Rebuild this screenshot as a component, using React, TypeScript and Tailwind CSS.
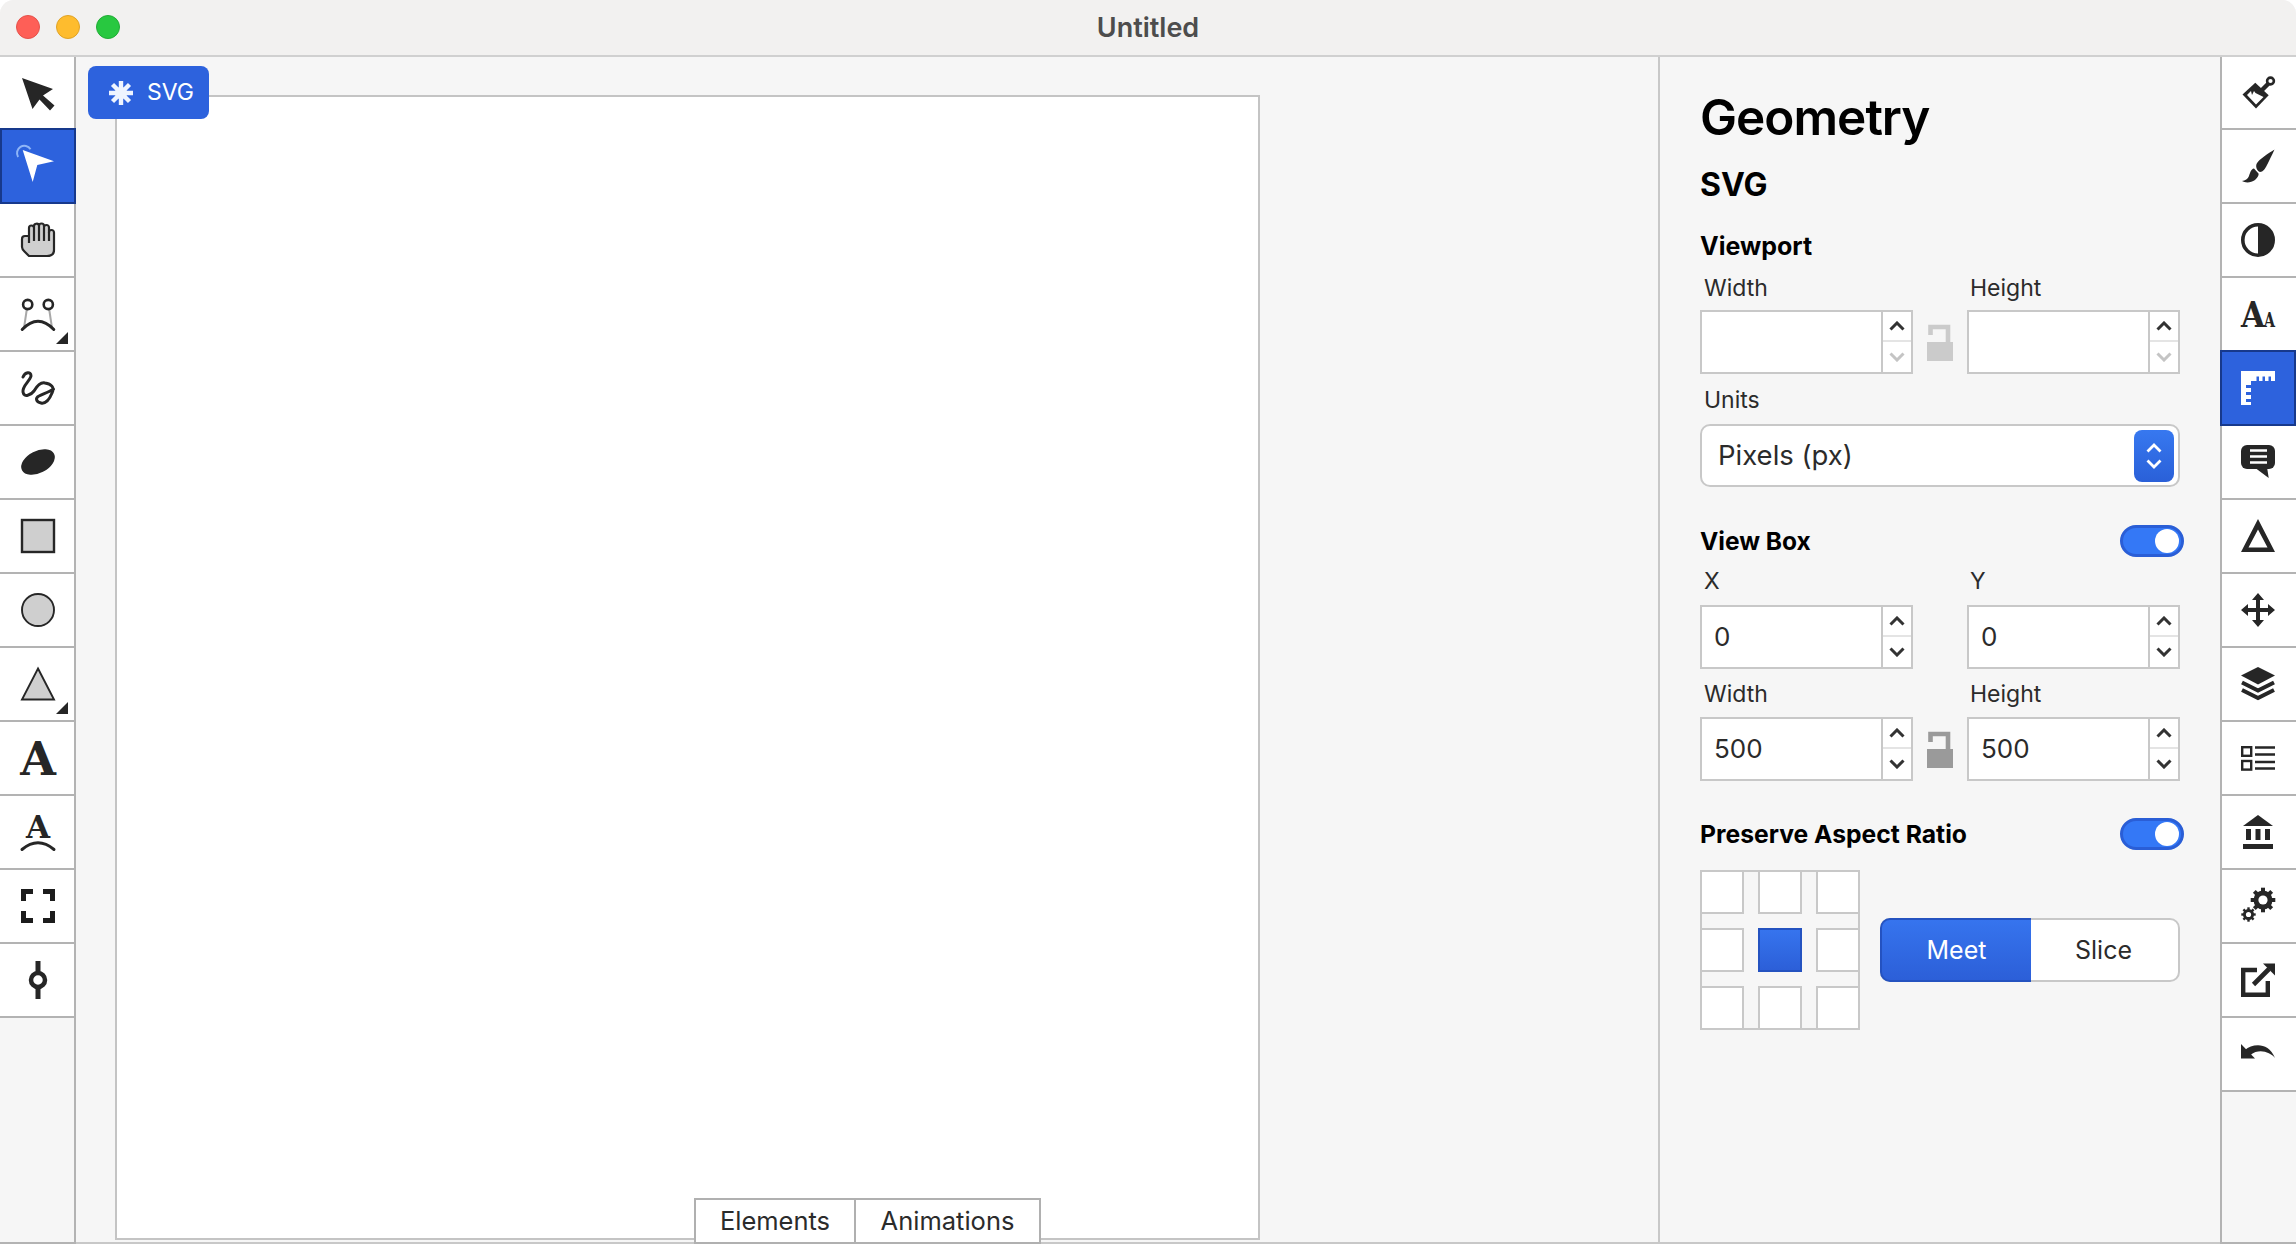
import type { ReactNode } from 'react';

const INK = '#262626';
const SOFT = '#cfcfcf';

function Ico({ children }: { children: ReactNode }) {
  return (
    <svg viewBox="0 0 34 34" className="w-[34px] h-[34px] overflow-visible">
      {children}
    </svg>
  );
}

function Gear({ cx, cy, r, hole, teeth, w }: { cx: number; cy: number; r: number; hole: number; teeth: number; w: number }) {
  return (
    <g>
      {Array.from({ length: teeth }).map((_, i) => (
        <rect
          key={i}
          x={cx - w / 2}
          y={cy - r - w * 0.7}
          width={w}
          height={w * 1.4}
          fill={INK}
          transform={`rotate(${(i * 360) / teeth} ${cx} ${cy})`}
        />
      ))}
      <circle cx={cx} cy={cy} r={r} fill={INK} />
      <circle cx={cx} cy={cy} r={hole} fill="#fff" />
    </g>
  );
}

const leftTools: { icon: ReactNode; more?: boolean; active?: boolean }[] = [
  {
    icon: (
      <Ico>
        <path d="M1 1L32 12L22 18.5L33.5 28.5L29 33.5L18.5 22.5L11.5 32Z" fill={INK} />
      </Ico>
    ),
  },
  {
    active: true,
    icon: (
      <Ico>
        <path d="M-4.4 6.5A6.5 6.5 0 1 1 8 -1.2" fill="none" stroke="#8fb5f7" strokeWidth="2" transform="translate(1.5 1.5)" />
        <path d="M1.7 1L33 12.3L16.3 16L11.7 33Z" fill="#fff" />
      </Ico>
    ),
  },
  {
    icon: (
      <Ico>
        <path
          d="M8 33H26C30 33 33 31 33 27V9.5A2.5 2.5 0 0 0 28 9.5V4.5A2.5 2.5 0 0 0 23 4.5V3A2.5 2.5 0 0 0 18 3V3A2.5 2.5 0 0 0 13 3.5V5A2.5 2.5 0 0 0 8 5V13H4C2 13 1 14.5 1 16V24C1 26 2 27 3.5 28.5Z"
          fill={SOFT}
          stroke={INK}
          strokeWidth="2.2"
          strokeLinejoin="round"
        />
        <path d="M13 5V18M18 3V18M23 5V18M28 9V18M8 13V20" fill="none" stroke={INK} strokeWidth="2.2" />
      </Ico>
    ),
  },
  {
    more: true,
    icon: (
      <Ico>
        <path d="M6 11L3 31M28 11L31 31" stroke="#a8a8a8" strokeWidth="2" fill="none" />
        <circle cx="6.7" cy="7.5" r="4.6" fill="#fff" stroke={INK} strokeWidth="2.6" />
        <circle cx="27.3" cy="7.5" r="4.6" fill="#fff" stroke={INK} strokeWidth="2.6" />
        <path d="M1.2 32.5Q17 16 32.8 32.5" fill="none" stroke={INK} strokeWidth="3" strokeLinecap="round" />
      </Ico>
    ),
  },
  {
    icon: (
      <Ico>
        <path
          d="M2 6C4 1 10 0 10 5C9 10 1 15 2 21C3 27 10 24 13 20C16 15 20 11 24 12C30 13 34 16 31 22C29 27 25 33 20 32C15 31 14 27 18 25C22 23 28 21 32.5 18"
          fill="none"
          stroke={INK}
          strokeWidth="3"
          strokeLinecap="round"
        />
      </Ico>
    ),
  },
  {
    icon: (
      <Ico>
        <ellipse cx="17" cy="17" rx="18" ry="11" fill={INK} transform="rotate(-27 17 17)" />
      </Ico>
    ),
  },
  {
    icon: (
      <Ico>
        <rect x="1" y="1" width="32" height="32" fill={SOFT} stroke={INK} strokeWidth="2.4" />
      </Ico>
    ),
  },
  {
    icon: (
      <Ico>
        <circle cx="17" cy="17" r="16" fill={SOFT} stroke={INK} strokeWidth="1.9" />
      </Ico>
    ),
  },
  {
    more: true,
    icon: (
      <Ico>
        <path d="M17 1.5L33 32.5H1Z" fill={SOFT} stroke={INK} strokeWidth="1.9" />
      </Ico>
    ),
  },
  {
    icon: (
      <Ico>
        <text x="17" y="33.5" textAnchor="middle" fontFamily="'DejaVu Serif', serif" fontWeight="700" fontSize="46" fill={INK}>
          A
        </text>
      </Ico>
    ),
  },
  {
    icon: (
      <Ico>
        <text x="17" y="23" textAnchor="middle" fontFamily="'DejaVu Serif', serif" fontWeight="700" fontSize="31" fill={INK}>
          A
        </text>
        <path d="M1 34.5Q17 21 33 34.5" fill="none" stroke={INK} strokeWidth="3" strokeLinecap="round" />
      </Ico>
    ),
  },
  {
    icon: (
      <Ico>
        <path d="M12 2.5H2.5V12M22 2.5H31.5V12M12 31.5H2.5V22M22 31.5H31.5V22" fill="none" stroke="#1c1c1c" strokeWidth="5" />
      </Ico>
    ),
  },
  {
    icon: (
      <Ico>
        <path d="M17 -2V9M17 25V36" stroke={INK} strokeWidth="5" />
        <circle cx="17" cy="17" r="7" fill="#fff" stroke={INK} strokeWidth="4.5" />
      </Ico>
    ),
  },
];

const rightTools: { icon: ReactNode; active?: boolean }[] = [
  {
    icon: (
      <Ico>
        <circle cx="29.5" cy="5" r="3.4" fill="none" stroke={INK} strokeWidth="2.6" />
        <path d="M27.5 7.5L21 14" stroke={INK} strokeWidth="4.5" />
        <path d="M14.3 6.7L27.7 19.3L15 32.5L1.5 18.5Z" fill={INK} />
        <path d="M14.5 17L22.5 21L15 28.5L6 19L10 15L11 19L13 15Z" fill="#fff" />
      </Ico>
    ),
  },
  {
    icon: (
      <Ico>
        <path d="M33.5 .5C28 4 18 10 15.5 15C14.5 18 16 22 19 23C22 23 24 20 26 16C28 12 31 6 33.5 .5Z" fill={INK} />
        <path d="M13 19.5C10 20 9 24 8 27C7 30 4 31.5 1 32C4 34 10 34 14 31C17 28 18 26 17.5 24.5Z" fill={INK} />
      </Ico>
    ),
  },
  {
    icon: (
      <Ico>
        <circle cx="17" cy="17" r="15.2" fill="#fff" stroke={INK} strokeWidth="3.6" />
        <path d="M17 1.8A15.2 15.2 0 0 1 17 32.2Z" fill={INK} />
      </Ico>
    ),
  },
  {
    icon: (
      <Ico>
        <text x="0" y="30" fontFamily="'DejaVu Serif', serif" fontWeight="700" fontSize="35" fill={INK} textLength="24" lengthAdjust="spacingAndGlyphs">
          A
        </text>
        <text x="23" y="30" fontFamily="'DejaVu Serif', serif" fontWeight="700" fontSize="20" fill={INK} textLength="11" lengthAdjust="spacingAndGlyphs">
          A
        </text>
      </Ico>
    ),
  },
  {
    active: true,
    icon: (
      <Ico>
        <path d="M0 0H34V10H30V5.5H27.5V10H24V5.5H21.5V10H18V5.5H15.5V10H10V14H5V17H10V21H5V24H10V28H5V31H10V34H0Z" fill="#fff" />
      </Ico>
    ),
  },
  {
    icon: (
      <Ico>
        <rect x="0" y="0" width="34" height="24" rx="6" fill={INK} />
        <path d="M13 22L27.7 33L26 22Z" fill={INK} />
        <path d="M9 5.5H26M9 11.5H26M9 17.5H26" stroke="#fff" strokeWidth="2.6" />
      </Ico>
    ),
  },
  {
    icon: (
      <Ico>
        <path fillRule="evenodd" d="M17 0L34 33H0ZM17 10.5L7.5 28.5H26.5Z" fill={INK} />
      </Ico>
    ),
  },
  {
    icon: (
      <Ico>
        <path d="M17 4V30M4 17H30" stroke={INK} strokeWidth="4" />
        <path d="M17 0L23 7H11ZM17 34L11 27H23ZM0 17L7 11V23ZM34 17L27 23V11Z" fill={INK} />
      </Ico>
    ),
  },
  {
    icon: (
      <Ico>
        <path d="M17 0L34 8.5L17 17.5L0 8.5Z" fill={INK} />
        <path d="M1 15.5L17 23.5L33 15.5M1 23L17 31L33 23" fill="none" stroke={INK} strokeWidth="4" />
      </Ico>
    ),
  },
  {
    icon: (
      <Ico>
        <g transform="translate(0 5)">
          <rect x="1.2" y="1.2" width="9" height="8.6" fill="#fff" stroke={INK} strokeWidth="2.4" />
          <rect x="1.2" y="15" width="9" height="8.6" fill="#fff" stroke={INK} strokeWidth="2.4" />
          <path d="M14 1.5H34M14 8.5H34M14 16H34M14 22.5H34" stroke={INK} strokeWidth="2.4" />
        </g>
      </Ico>
    ),
  },
  {
    icon: (
      <Ico>
        <path d="M2 11L17 0L32 11Z" fill={INK} />
        <path d="M5 14H10V25H5ZM14.5 14H19.5V25H14.5ZM24 14H29V25H24ZM2 29H32V34H2Z" fill={INK} />
      </Ico>
    ),
  },
  {
    icon: (
      <Ico>
        <Gear cx={22} cy={11} r={9.5} hole={4.6} teeth={8} w={4} />
        <Gear cx={7.5} cy={25.5} r={5.5} hole={2.6} teeth={8} w={2.4} />
      </Ico>
    ),
  },
  {
    icon: (
      <Ico>
        <path d="M16 7H2.2V31.8H26.8V18" fill="none" stroke={INK} strokeWidth="4.4" />
        <path d="M12.5 21.5L28 6" stroke={INK} strokeWidth="4.6" />
        <path d="M34 0.5V12.5L22 .5Z" fill={INK} />
      </Ico>
    ),
  },
  {
    icon: (
      <Ico>
        <path d="M0 7V21.5H14Z" fill={INK} />
        <path d="M4 13C11 7 27 4 34 21C29 15 18 11 9.5 18Z" fill={INK} />
      </Ico>
    ),
  },
];

function Chevron({ up, muted }: { up?: boolean; muted?: boolean }) {
  return (
    <svg viewBox="0 0 16 10" className="w-[16px] h-[10px]">
      <path d={up ? 'M1.5 8.5L8 2L14.5 8.5' : 'M1.5 1.5L8 8L14.5 1.5'} fill="none" stroke={muted ? '#c4c4c4' : '#333'} strokeWidth="3" />
    </svg>
  );
}

function Stepper({ value, downMuted }: { value?: string; downMuted?: boolean }) {
  return (
    <div className="w-[213px] h-[64px] flex bg-white border-2 border-[#c8c8c8]">
      <div className="flex-1 flex items-center pl-[12px] text-[26px] leading-none text-[#2b2b2b]">{value}</div>
      <div className="w-[30px] flex flex-col border-l-2 border-[#c8c8c8]">
        <div className="h-[30px] flex items-center justify-center border-b-2 border-[#e4e4e4]">
          <Chevron up />
        </div>
        <div className="flex-1 flex items-center justify-center">
          <Chevron muted={downMuted} />
        </div>
      </div>
    </div>
  );
}

function Lock({ color }: { color: string }) {
  return (
    <svg viewBox="0 0 26 37" className="w-[26px] h-[37px]">
      <path d="M3.5 11V3H21V18" fill="none" stroke={color} strokeWidth="4.6" />
      <rect x="0" y="18" width="26" height="19" fill={color} />
    </svg>
  );
}

function Toggle() {
  return (
    <div className="w-[64px] h-[32px] rounded-full bg-[#3478f6] border-[3px] border-[#2a5ed6] flex items-center justify-end pr-[2px]">
      <div className="w-[24px] h-[24px] rounded-full bg-white" />
    </div>
  );
}

function FieldLabel({ children }: { children: ReactNode }) {
  return <div className="pl-[4px] h-[24px] flex items-center text-[23px] leading-none text-[#2b2b2b]">{children}</div>;
}

export default function App() {
  return (
    <div className="w-[2296px] h-[1244px] flex flex-col overflow-hidden bg-white font-['Inter',sans-serif]">
      <div className="flex-1 min-h-0 flex flex-col bg-[#f6f6f6] rounded-t-[14px] overflow-hidden">
        {/* Title bar */}
        <div className="relative h-[57px] shrink-0 flex items-center justify-center bg-[#f2f1f0] border-b-2 border-[#d0d0d0]">
          <div className="absolute left-[16px] top-[15px] flex gap-[16px]">
            <span className="w-[24px] h-[24px] rounded-full bg-[#fe5f57] border border-[#e5524b]" />
            <span className="w-[24px] h-[24px] rounded-full bg-[#febc2e] border border-[#e0a326]" />
            <span className="w-[24px] h-[24px] rounded-full bg-[#28c840] border border-[#22ac36]" />
          </div>
          <span className="text-[27px] font-semibold leading-none text-[#4d4d4d]">Untitled</span>
        </div>

        <div className="flex-1 min-h-0 flex">
          {/* Left tools */}
          <div className="w-[76px] shrink-0 flex flex-col border-r-2 border-b-2 border-[#b3b3b3]">
            {leftTools.map((t, i) => (
              <div
                key={i}
                className={
                  'relative flex items-center justify-center ' +
                  (i === 0
                    ? 'h-[73px] pl-[2px] bg-white'
                    : t.active
                      ? 'h-[76px] -mt-[2px] -mr-[2px] bg-[#2d62dd] border-2 border-[#17398c]'
                      : 'h-[74px] pl-[2px] bg-white border-b-2 border-[#b3b3b3]')
                }
              >
                {t.icon}
                {t.more && (
                  <svg viewBox="0 0 12 12" className="absolute right-[6px] bottom-[6px] w-[12px] h-[12px]">
                    <path d="M12 0V12H0Z" fill={INK} />
                  </svg>
                )}
              </div>
            ))}
          </div>

          {/* Canvas */}
          <div className="relative w-[1584px] shrink-0 border-r-2 border-b-2 border-[#c8c8c8] pl-[39px] pt-[38px]">
            <div className="w-[1145px] h-[1145px] bg-white border-2 border-[#c4c4c4]" />
            <div className="absolute left-[12px] top-[9px] w-[121px] h-[53px] flex items-center gap-[13px] pl-[20px] rounded-[8px] bg-[#2d62dd] text-white text-[23px] leading-none">
              <svg viewBox="0 0 26 26" className="w-[26px] h-[26px]">
                <path d="M13 1V25M1 13H25M4.5 4.5L21.5 21.5M21.5 4.5L4.5 21.5" stroke="#eef4ff" strokeWidth="4.4" />
                <circle cx="13" cy="13" r="6" fill="#eef4ff" />
              </svg>
              SVG
            </div>
            <div className="absolute left-[618px] -bottom-[2px] h-[46px] flex bg-white border-2 border-[#b0b0b0] text-[25.5px] leading-none text-[#2b2b2b]">
              <div className="w-[160px] flex items-center justify-center border-r-2 border-[#b0b0b0]">Elements</div>
              <div className="w-[183px] flex items-center justify-center">Animations</div>
            </div>
          </div>

          {/* Geometry panel */}
          <div className="w-[560px] shrink-0 pl-[40px] pr-[40px] pt-[31px] flex flex-col border-b-2 border-[#c8c8c8]">
            <h1 className="h-[60px] flex items-center text-[49.5px] font-semibold tracking-[-0.02em] leading-none text-black">Geometry</h1>
            <h2 className="mt-[17px] h-[40px] flex items-center text-[32px] font-bold leading-none text-black">SVG</h2>

            <div className="mt-[27px] h-[28px] flex items-center text-[25px] font-bold leading-none text-black">Viewport</div>
            <div className="mt-[16px] flex">
              <div className="w-[213px]">
                <FieldLabel>Width</FieldLabel>
              </div>
              <div className="ml-[53px]">
                <FieldLabel>Height</FieldLabel>
              </div>
            </div>
            <div className="mt-[10px] flex items-center justify-between w-[480px]">
              <Stepper downMuted />
              <Lock color="#cbcbcb" />
              <Stepper downMuted />
            </div>
            <div className="mt-[14px]">
              <FieldLabel>Units</FieldLabel>
            </div>
            <div className="mt-[12px] w-[480px] h-[63px] flex items-center justify-between pl-[16px] pr-[4px] bg-white border-2 border-[#c8c8c8] rounded-[10px] text-[27.5px] leading-none text-[#2b2b2b]">
              Pixels (px)
              <div className="w-[40px] h-[52px] flex flex-col items-center justify-center gap-[6px] rounded-[8px] bg-gradient-to-b from-[#3778f0] to-[#2a60d8]">
                <svg viewBox="0 0 16 10" className="w-[16px] h-[10px]">
                  <path d="M1.5 8.5L8 2L14.5 8.5" fill="none" stroke="#fff" strokeWidth="2.8" />
                </svg>
                <svg viewBox="0 0 16 10" className="w-[16px] h-[10px]">
                  <path d="M1.5 1.5L8 8L14.5 1.5" fill="none" stroke="#fff" strokeWidth="2.8" />
                </svg>
              </div>
            </div>

            <div className="mt-[38px] w-[484px] h-[32px] flex items-center justify-between text-[24.5px] font-bold leading-none text-black">
              View Box
              <Toggle />
            </div>
            <div className="mt-[12px] flex">
              <div className="w-[213px]">
                <FieldLabel>X</FieldLabel>
              </div>
              <div className="ml-[53px]">
                <FieldLabel>Y</FieldLabel>
              </div>
            </div>
            <div className="mt-[12px] flex justify-between w-[480px]">
              <Stepper value="0" />
              <Stepper value="0" />
            </div>
            <div className="mt-[13px] flex">
              <div className="w-[213px]">
                <FieldLabel>Width</FieldLabel>
              </div>
              <div className="ml-[53px]">
                <FieldLabel>Height</FieldLabel>
              </div>
            </div>
            <div className="mt-[11px] flex items-center justify-between w-[480px]">
              <Stepper value="500" />
              <Lock color="#9a9a9a" />
              <Stepper value="500" />
            </div>

            <div className="mt-[37px] w-[484px] h-[32px] flex items-center justify-between text-[24.7px] font-bold leading-none text-black">
              Preserve Aspect Ratio
              <Toggle />
            </div>
            <div className="mt-[20px] flex items-center gap-[20px]">
              <div className="w-[160px] h-[160px] border-2 border-[#c8c8c8]">
                <div className="-m-[2px] w-[160px] grid grid-cols-[repeat(3,44px)] grid-rows-[repeat(3,44px)] gap-[14px]">
                  {[0, 1, 2, 3, 4, 5, 6, 7, 8].map((n) =>
                    n === 4 ? (
                      <div key={n} className="bg-gradient-to-b from-[#3674ee] to-[#2c5fd8] border-2 border-[#2452c0]" />
                    ) : (
                      <div key={n} className="bg-white border-2 border-[#c8c8c8]" />
                    ),
                  )}
                </div>
              </div>
              <div className="w-[300px] h-[64px] flex rounded-[10px] bg-white border-2 border-[#c8c8c8] text-[25px] leading-none">
                <div className="w-[151px] -m-[2px] flex items-center justify-center rounded-l-[10px] bg-gradient-to-b from-[#3674ee] to-[#2c5fd8] border-2 border-[#2452c0] border-r-0 text-white">
                  Meet
                </div>
                <div className="flex-1 flex items-center justify-center text-[#2b2b2b]">Slice</div>
              </div>
            </div>
          </div>

          {/* Right tools */}
          <div className="flex-1 flex flex-col border-l-2 border-b-2 border-[#b3b3b3]">
            {rightTools.map((t, i) => (
              <div
                key={i}
                className={
                  'flex items-center justify-center ' +
                  (i === 0
                    ? 'h-[73px] pr-[2px] bg-white border-b-2 border-[#b3b3b3]'
                    : t.active
                      ? 'h-[76px] -mt-[2px] -ml-[2px] bg-[#2d62dd] border-2 border-[#17398c]'
                      : 'h-[74px] pr-[2px] bg-white border-b-2 border-[#b3b3b3]')
                }
              >
                {t.icon}
              </div>
            ))}
          </div>
        </div>
      </div>
    </div>
  );
}
